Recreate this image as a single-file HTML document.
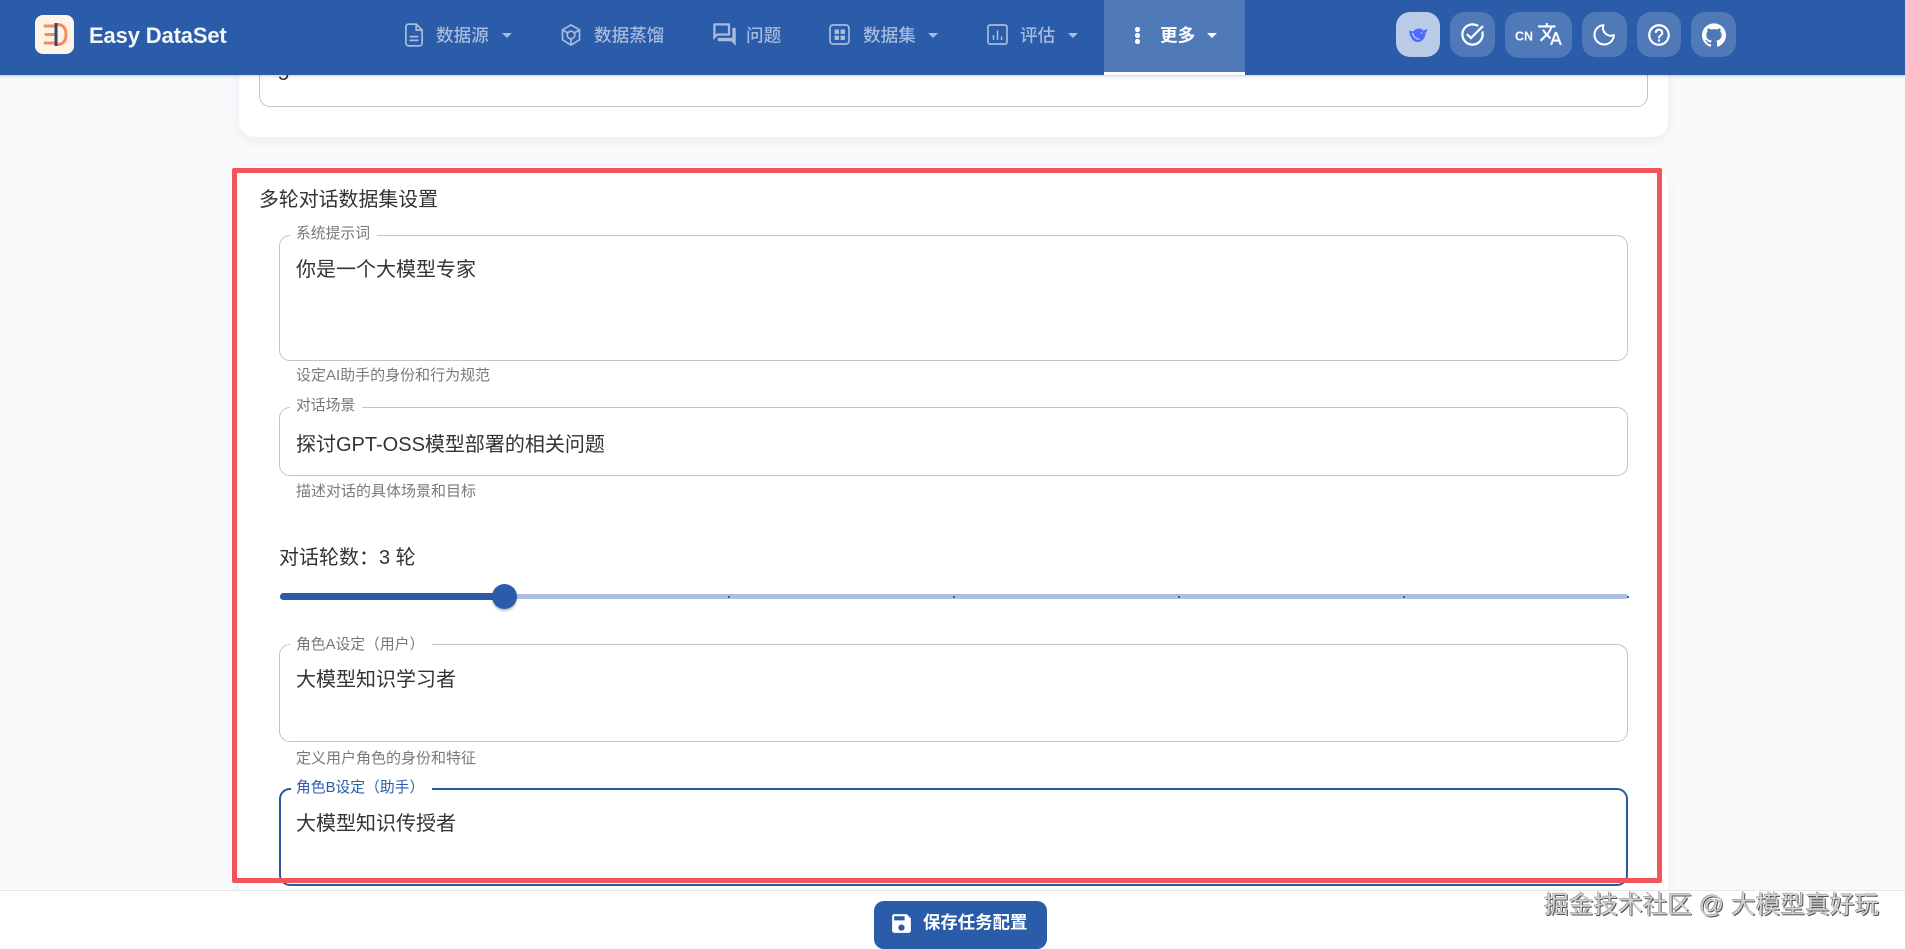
<!DOCTYPE html>
<html lang="zh">
<head>
<meta charset="utf-8">
<title>Easy DataSet</title>
<style>
*{box-sizing:border-box;margin:0;padding:0}
html,body{width:1905px;height:945px;overflow:hidden;background:#F8FAFC;font-family:"Liberation Sans","Noto Sans CJK SC",sans-serif;color:#2f2f2f}
.a{position:absolute}
.t{position:absolute;white-space:nowrap;transform:translateY(-50%);line-height:1.2}
.nav{font-size:17.6px;color:#A6BBDD;font-weight:500}
.btn{position:absolute;top:12px;height:45px;border-radius:14px;background:#5079B7;display:flex;align-items:center;justify-content:center}
.field{position:absolute;left:279px;width:1349px;background:#fff;border:1px solid #c4c4c4;border-radius:11px}
.notch{position:absolute;background:#fff;height:4px}
.lab{font-size:14.8px;color:#777;left:296px}
.val{font-size:20px;color:#333;left:296px}
.help{font-size:15px;color:#7a7a7a;left:296px}
.caret{position:absolute;width:0;height:0;border-left:5.5px solid transparent;border-right:5.5px solid transparent;border-top:5.5px solid #A6BBDD;top:33px}
svg{display:block}
.ic{position:absolute}
</style>
</head>
<body>
<!-- cards -->
<div class="a" style="left:239px;top:40px;width:1429px;height:97px;background:#fff;border-radius:16px;box-shadow:0 4px 14px rgba(30,40,60,.06)"></div>
<div class="a" style="left:259px;top:40px;width:1389px;height:67px;border:1px solid #c4c4c4;border-radius:11px;background:#fff"></div>
<div class="t" style="left:278px;top:74px;font-size:20px">5</div>

<div class="a" style="left:239px;top:167px;width:1429px;height:740px;background:#fff;border-radius:16px;box-shadow:0 4px 14px rgba(30,40,60,.05)"></div>

<div class="t" style="left:259px;top:201px;font-size:19.9px;color:#333">多轮对话数据集设置</div>

<!-- field 1 -->
<div class="field" style="top:235px;height:126px"></div>
<div class="notch" style="left:290px;top:233px;width:87px"></div>
<div class="t lab" style="top:235px">系统提示词</div>
<div class="t val" style="top:270px">你是一个大模型专家</div>
<div class="t help" style="top:376px">设定AI助手的身份和行为规范</div>

<!-- field 2 -->
<div class="field" style="top:407px;height:69px"></div>
<div class="notch" style="left:290px;top:405px;width:72px"></div>
<div class="t lab" style="top:407px">对话场景</div>
<div class="t val" style="top:445px">探讨GPT-OSS模型部署的相关问题</div>
<div class="t help" style="top:492px">描述对话的具体场景和目标</div>

<!-- slider -->
<div class="t" style="left:279px;top:558px;font-size:20px;color:#333">对话轮数：3 轮</div>
<div class="a" style="left:280px;top:594px;width:1348px;height:5px;background:#ABC0DF;border-radius:3px"></div>
<div class="a" style="left:280px;top:593px;width:224px;height:7px;background:#2A5CAA;border-radius:4px"></div>
<div class="a" style="left:728px;top:596px;width:2px;height:2px;background:#3f5f90"></div>
<div class="a" style="left:953px;top:596px;width:2px;height:2px;background:#3f5f90"></div>
<div class="a" style="left:1178px;top:596px;width:2px;height:2px;background:#3f5f90"></div>
<div class="a" style="left:1403px;top:596px;width:2px;height:2px;background:#3f5f90"></div>
<div class="a" style="left:1627px;top:596px;width:2px;height:2px;background:#3f5f90"></div>
<div class="a" style="left:492px;top:584px;width:25px;height:25px;border-radius:50%;background:#2A5CAA;box-shadow:0 2px 2px rgba(0,0,0,.25)"></div>

<!-- field 3 -->
<div class="field" style="top:644px;height:98px"></div>
<div class="notch" style="left:290px;top:642px;width:142px"></div>
<div class="t lab" style="top:646px">角色A设定（用户）</div>
<div class="t val" style="top:680px">大模型知识学习者</div>
<div class="t help" style="top:759px">定义用户角色的身份和特征</div>

<!-- field 4 -->
<div class="field" style="top:788px;height:98px;border:2px solid #2A5A9E"></div>
<div class="notch" style="left:291px;top:786px;width:141px"></div>
<div class="t lab" style="top:789px;color:#2A5CAA">角色B设定（助手）</div>
<div class="t val" style="top:824px">大模型知识传授者</div>

<!-- red frame -->
<div class="a" style="left:232px;top:168px;width:430px;height:0"></div>
<div class="a" style="left:232px;top:168px;width:1430px;height:715px;border:5px solid #F1555A;border-radius:2px"></div>

<!-- footer -->
<div class="a" style="left:0;top:890px;width:1905px;height:55px;background:#fff;border-top:1px solid #e3e6ea"></div>
<div class="a" style="left:874px;top:901px;width:173px;height:48px;background:#2A5CAA;border-radius:10px"></div>
<svg class="ic" style="left:889px;top:911px" width="25" height="25" viewBox="0 0 24 24" fill="#fff"><path d="M17 3H5c-1.11 0-2 .9-2 2v14c0 1.1.89 2 2 2h14c1.1 0 2-.9 2-2V7l-4-4zm-5 16c-1.66 0-3-1.34-3-3s1.34-3 3-3 3 1.34 3 3-1.34 3-3 3zm3-10H5V5h10v4z"/></svg>
<div class="t" style="left:923px;top:923px;font-size:17.4px;font-weight:700;color:#fff">保存任务配置</div>
<div class="t" style="left:1544px;top:906px;font-size:24.7px;color:#d2d2d2;text-shadow:1px 1px 0 #555,-.5px -.5px 0 #888">掘金技术社区 @ 大模型真好玩</div>

<!-- header -->
<div class="a" style="left:0;top:0;width:1905px;height:75px;background:#2A5CAA;box-shadow:0 1px 3px rgba(30,60,110,.25)"></div>

<!-- logo -->
<div class="a" style="left:35px;top:15px;width:39px;height:39px;border-radius:8px;background:#FFF2E6"></div>
<svg class="ic" style="left:35px;top:15px" width="39" height="39" viewBox="0 0 39 39" fill="none">
<path d="M10 11h10M11 19.5h8M10 28h10" stroke="#F48A62" stroke-width="3" stroke-linecap="round"/>
<path d="M23 9.500c6 .3 8 5 8 10s-2 9.700-8 10" stroke="#F48A62" stroke-width="3" stroke-linecap="round"/>
<path d="M21 8v23" stroke="#3C4660" stroke-width="3"/>
</svg>
<div class="t" style="left:89px;top:36px;font-size:22px;font-weight:700;color:#F4F7FC;letter-spacing:-.15px">Easy DataSet</div>

<!-- nav -->
<svg class="ic" style="left:401px;top:22px" width="26" height="26" viewBox="0 0 24 24" fill="none" stroke="#A6BBDD" stroke-width="1.6" stroke-linecap="round" stroke-linejoin="round"><path d="M14 2H7a2.500 2.500 0 0 0-2.500 2.500v15A2.500 2.500 0 0 0 7 22h10a2.500 2.500 0 0 0 2.500-2.500V7.500z"/><path d="M14 2v5.500h5.500M8.500 13.500h7M8.500 17h7"/></svg>
<div class="t nav" style="left:436px;top:36px">数据源</div>
<div class="caret" style="left:502px"></div>

<svg class="ic" style="left:559px;top:23px" width="24" height="24" viewBox="0 0 24 24" fill="none" stroke="#A6BBDD" stroke-width="1.7" stroke-linejoin="round"><path d="M12 2l8.500 4.800v10L12 22l-8.500-5.200v-10z"/><circle cx="12" cy="12" r="3.800"/><path d="M3.800 7l5 3M20.200 7l-5 3M12 16v5.500"/></svg>
<div class="t nav" style="left:594px;top:36px">数据蒸馏</div>

<svg class="ic" style="left:711px;top:21px" width="27" height="27" viewBox="0 0 24 24" fill="#A6BBDD"><path d="M15 4v7H5.170L4 12.170V4h11m1-2H3c-.55 0-1 .45-1 1v14l4-4h10c.55 0 1-.45 1-1V3c0-.55-.45-1-1-1zm5 4h-2v9H6v2c0 .55.45 1 1 1h11l4 4V7c0-.55-.45-1-1-1z"/></svg>
<div class="t nav" style="left:746px;top:36px">问题</div>

<svg class="ic" style="left:828px;top:23px" width="23" height="23" viewBox="0 0 23 23" fill="none"><rect x="2" y="2" width="19" height="19" rx="3" stroke="#A6BBDD" stroke-width="1.7"/><rect x="6.500" y="6.500" width="4.500" height="4.500" rx=".6" fill="#A6BBDD"/><rect x="12.500" y="6.500" width="4.500" height="4.500" rx=".6" fill="#A6BBDD"/><rect x="6.500" y="12.500" width="4.500" height="4.500" rx=".6" fill="#A6BBDD"/><rect x="12.500" y="12.500" width="4.500" height="4.500" rx=".6" fill="#A6BBDD"/></svg>
<div class="t nav" style="left:863px;top:36px">数据集</div>
<div class="caret" style="left:928px"></div>

<svg class="ic" style="left:986px;top:23px" width="23" height="23" viewBox="0 0 23 23" fill="none" stroke="#A6BBDD" stroke-width="1.700"><rect x="2" y="2" width="19" height="19" rx="2"/><path d="M7.500 12v5M11.500 7.500V17M15.500 13.500V17" stroke-width="1.500"/></svg>
<div class="t nav" style="left:1020px;top:36px">评估</div>
<div class="caret" style="left:1068px"></div>

<div class="a" style="left:1104px;top:0;width:141px;height:75px;background:#5079B7"></div>
<div class="a" style="left:1104px;top:72px;width:141px;height:3px;background:#fff"></div>
<div class="a" style="left:1135px;top:27px;width:4.500px;height:4.500px;border-radius:50%;background:#fff"></div>
<div class="a" style="left:1135px;top:33px;width:4.500px;height:4.500px;border-radius:50%;background:#fff"></div>
<div class="a" style="left:1135px;top:39px;width:4.500px;height:4.500px;border-radius:50%;background:#fff"></div>
<div class="t nav" style="left:1160px;top:36px;color:#fff;font-weight:700">更多</div>
<div class="caret" style="left:1207px;border-top-color:#fff"></div>

<!-- right buttons -->
<div class="btn" style="left:1396px;width:44px;background:#BACBE8"><svg width="21" height="17" viewBox="0 0 24 20" fill="#4D6BFE"><path d="M1 5c1.500 1 3 1.500 5 1 2-2.500 6-4 10-2.500l1 1.800c1.200.3 3.500-.8 5-2 .8 1.500-.2 3.500-1.800 4.700.3 5.500-3.500 11-9.200 11C5.500 19 1.500 12.500 1 5z"/><path d="M5 8c1 4.500 4.500 8 8 7.500" fill="none" stroke="#BACBE8" stroke-width="1.500"/><circle cx="15.500" cy="8" r="1" fill="#BACBE8"/></svg></div>
<div class="btn" style="left:1450px;width:45px"><svg width="27" height="27" viewBox="0 0 24 24" fill="#fff"><path d="M22 5.180 10.590 16.600l-4.240-4.240 1.410-1.410 2.830 2.830 10-10L22 5.180zm-2.210 5.040c.13.570.21 1.170.21 1.780 0 4.420-3.580 8-8 8s-8-3.580-8-8 3.580-8 8-8c1.580 0 3.040.460 4.280 1.250l1.440-1.440C16.100 2.670 14.130 2 12 2 6.480 2 2 6.480 2 12s4.480 10 10 10 10-4.480 10-10c0-1.190-.22-2.330-.6-3.390l-1.610 1.610z"/></svg></div>
<div class="btn" style="left:1505px;width:67px;height:46px"></div>
<div class="t" style="left:1515px;top:37px;font-size:12.500px;font-weight:700;color:#fff">CN</div>
<svg class="ic" style="left:1537px;top:21px" width="26" height="26" viewBox="0 0 24 24" fill="#fff"><path d="m12.870 15.070-2.540-2.510.03-.03c1.740-1.940 2.980-4.170 3.710-6.530H17V4h-7V2H8v2H1v1.990h11.170C11.500 7.920 10.440 9.750 9 11.350 8.070 10.320 7.300 9.190 6.690 8h-2c.73 1.630 1.730 3.170 2.980 4.560l-5.090 5.020L4 19l5-5 3.110 3.110.76-2.040zM18.500 10h-2L12 22h2l1.120-3h4.750L21 22h2l-4.500-12zm-2.620 7 1.620-4.330L19.120 17h-3.240z"/></svg>
<div class="btn" style="left:1582px;width:45px"><svg width="25" height="25" viewBox="0 0 24 24" fill="none" stroke="#fff" stroke-width="2" stroke-linejoin="round"><path d="M11 3a7.500 7.500 0 0 0 10 9.500A9.300 9.300 0 1 1 11 3z"/></svg></div>
<div class="btn" style="left:1637px;width:44px"><svg width="26" height="26" viewBox="0 0 24 24" fill="#fff"><path d="M11 18h2v-2h-2v2zm1-16C6.480 2 2 6.480 2 12s4.480 10 10 10 10-4.480 10-10S17.520 2 12 2zm0 18c-4.410 0-8-3.590-8-8s3.590-8 8-8 8 3.590 8 8-3.590 8-8 8zm0-14c-2.210 0-4 1.790-4 4h2c0-1.100.9-2 2-2s2 .9 2 2c0 2-3 1.750-3 5h2c0-2.250 3-2.500 3-5 0-2.210-1.790-4-4-4z"/></svg></div>
<div class="btn" style="left:1691px;width:45px"><svg width="26" height="26" viewBox="0 0 24 24" fill="#fff"><path d="M12 1.270a11 11 0 00-3.480 21.460c.55.090.73-.28.73-.55v-1.840c-3.030.64-3.670-1.460-3.670-1.460-.55-1.290-1.280-1.650-1.280-1.650-.92-.65.100-.65.100-.65 1.100 0 1.730 1.100 1.730 1.100.92 1.650 2.570 1.200 3.210.92a2 2 0 01.64-1.470c-2.470-.27-5.040-1.190-5.040-5.500 0-1.100.46-2.100 1.200-2.840a3.760 3.760 0 010-2.930s.91-.28 3.110 1.100c1.800-.49 3.700-.49 5.500 0 2.100-1.380 3.020-1.100 3.020-1.100a3.760 3.760 0 010 2.930c.83.74 1.200 1.740 1.200 2.940 0 4.210-2.570 5.130-5.040 5.400.45.37.82.92.82 2.020v3.030c0 .27.1.64.73.55A11 11 0 0012 1.270"/></svg></div>
</body>
</html>
